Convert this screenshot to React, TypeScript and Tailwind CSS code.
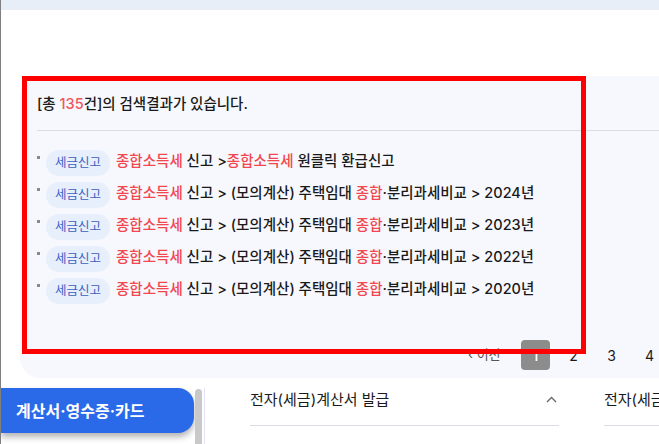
import React from "react";

interface ResultRow {
  tag: string;
  parts: { text: string; hot?: boolean }[];
}

const rows: ResultRow[] = [
  {
    tag: "세금신고",
    parts: [
      { text: "종합소득세", hot: true },
      { text: " 신고 >" },
      { text: "종합소득세", hot: true },
      { text: " 원클릭 환급신고" },
    ],
  },
  ...["2024년", "2023년", "2022년", "2020년"].map((year) => ({
    tag: "세금신고",
    parts: [
      { text: "종합소득세", hot: true },
      { text: " 신고 > (모의계산) 주택임대 " },
      { text: "종합", hot: true },
      { text: `·분리과세비교 > ${year}` },
    ],
  })),
];

function ChevronUp() {
  return (
    <svg width="11" height="7" viewBox="0 0 11 7" fill="none">
      <path d="M1 6l4.5-4.5L10 6" stroke="#666" strokeWidth="1.3" />
    </svg>
  );
}

export default function App() {
  return (
    <div className="relative w-[659px] h-[444px] overflow-hidden bg-white border-l border-[#808080] font-['Inter','Noto_Sans_CJK_KR',sans-serif] text-[#1a1a1a]">
      <div className="h-[10px] bg-[#e8eef8]" />

      {/* search results panel */}
      <div className="mt-[66px] ml-[19px] w-[700px] h-[302px] rounded-l-[20px] bg-[#f7f8fd] flex flex-col">
        <div className="ml-[17px] h-[55px] pt-[18px] border-b border-[#dcdde3] text-[14.5px] leading-[20px] font-medium">
          [총 <span className="text-[#f0555f]">135</span>건]의 검색결과가 있습니다.
        </div>

        <ul className="ml-[17px] mt-[18px]">
          {rows.map((row, i) => (
            <li key={i} className="flex items-start h-[32px]">
              <span className="mt-[7px] w-[3px] h-[3px] bg-[#8a8a8a]" />
              <span className="ml-[6px] mt-[1px] h-[26px] px-[9px] rounded-full bg-[#e8effc] text-[#3b5fc4] text-[12.5px] leading-[26px]">
                {row.tag}
              </span>
              <span className="ml-[6px] mt-[2px] text-[14.5px] leading-[20px] font-medium whitespace-nowrap">
                {row.parts.map((p, j) => (
                  <span key={j} className={p.hot ? "text-[#f2474f]" : ""}>
                    {p.text}
                  </span>
                ))}
              </span>
            </li>
          ))}
        </ul>

        <div className="mt-auto mb-[8px] pl-[448px] flex items-center text-[14px]">
          <span className="w-[53px] text-[#555] text-[13px] whitespace-nowrap">‹ 이전</span>
          <div className="flex gap-[9px]">
            <span className="w-[29px] h-[30px] rounded-[4px] bg-[#8c8c8c] text-white flex items-center justify-center font-medium">1</span>
            <span className="w-[29px] h-[30px] flex items-center justify-center">2</span>
            <span className="w-[29px] h-[30px] flex items-center justify-center">3</span>
            <span className="w-[29px] h-[30px] flex items-center justify-center">4</span>
          </div>
        </div>
      </div>

      {/* lower menu area */}
      <div className="mt-[10px] flex h-[56px]">
        <div className="w-[193px] h-[45px] shrink-0 rounded-r-[16px] bg-[#2a6ae8] shadow-[0_4px_6px_rgba(0,0,0,0.3)] flex items-center pl-[15px] text-white text-[16px] font-bold whitespace-nowrap">
          계산서·영수증·카드
        </div>
        <div className="ml-[1px] mt-[1px] w-[7px] shrink-0 rounded-t-full bg-[#c9c9c9]" />
        <div className="ml-[2px] w-[1px] shrink-0 bg-[#e3e3f5]" />

        <div className="ml-[45px] w-[309px] shrink-0">
          <div className="h-[38px] flex items-start justify-between border-b border-[#dcdde3]">
            <span className="text-[15px] leading-[24px]">전자(세금)계산서 발급</span>
            <span className="mt-[8px] mr-[2px]"><ChevronUp /></span>
          </div>
        </div>
        <div className="ml-[45px] w-[309px] shrink-0">
          <div className="h-[38px] flex items-start border-b border-[#dcdde3]">
            <span className="text-[15px] leading-[24px] whitespace-nowrap">전자(세금)계산서 조회</span>
          </div>
        </div>
      </div>

      {/* annotation frame */}
      <div className="absolute left-[21px] top-[76px] w-[564px] h-[278px] border-[5px] border-[#ff0000]" />
    </div>
  );
}
